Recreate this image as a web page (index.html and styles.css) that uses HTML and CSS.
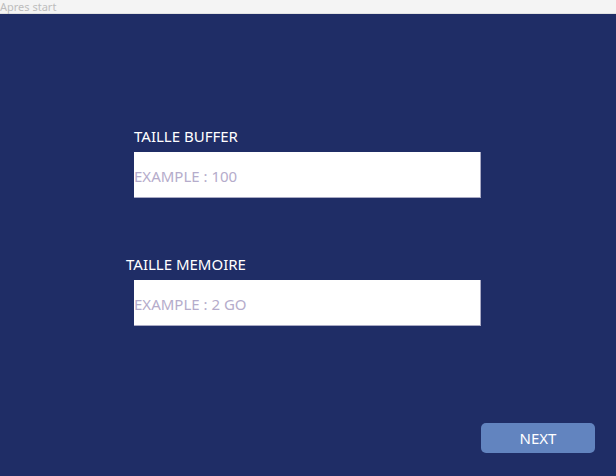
FILE: index.html
```html
<!DOCTYPE html>
<html>
<head>
<meta charset="utf-8">
<link rel="stylesheet" href="styles.css">
</head>
<body>
<div class="titlebar">Apres start</div>
<main class="screen">
  <div class="field">
    <label class="label label-buffer">TAILLE BUFFER</label>
    <input class="input" type="text" placeholder="EXAMPLE : 100">
  </div>
  <div class="field field-second">
    <label class="label label-memoire">TAILLE MEMOIRE</label>
    <input class="input" type="text" placeholder="EXAMPLE : 2 GO">
  </div>
  <button class="next">NEXT</button>
</main>
</body>
</html>
```
FILE: styles.css
```css
html, body {
  margin: 0;
  padding: 0;
  width: 616px;
  height: 476px;
  overflow: hidden;
  font-family: "Noto Sans", "Open Sans", sans-serif;
}
.titlebar {
  height: 14px;
  background: #f4f4f4;
  color: #bdbdbd;
  font-size: 11px;
  line-height: 13px;
  padding-left: 0;
  box-sizing: border-box;
  border-bottom: 1px solid #e2e2e2;
}
.screen {
  height: 462px;
  background: #1f2d66;
  display: flex;
  flex-direction: column;
  padding-top: 113px;
  box-sizing: border-box;
}
.field {
  display: flex;
  flex-direction: column;
}
.field-second {
  margin-top: 57px;
}
.label {
  color: #ffffff;
  font-size: 15px;
  line-height: 19px;
  height: 19px;
  margin-bottom: 6px;
}
.label-buffer { margin-left: 134px; }
.label-memoire { margin-left: 126px; }
.input {
  margin: 0 0 0 134px;
  width: 347px;
  height: 46px;
  box-sizing: border-box;
  border: none;
  box-shadow: inset -1px -1px 0 #a9aac4;
  background: #fff;
  padding: 2px 0 0 0;
  font-family: "Noto Sans", "Open Sans", sans-serif;
  font-size: 15px;
  outline: none;
}
.input::placeholder {
  color: #b5accb;
}
.next {
  margin-top: auto;
  margin-bottom: 23px;
  margin-right: 21px;
  align-self: flex-end;
  width: 114px;
  height: 30px;
  border: none;
  border-radius: 5px;
  background: #6284bf;
  color: #fff;
  font-family: "Noto Sans", "Open Sans", sans-serif;
  font-size: 15px;
  padding: 0;
}
```
